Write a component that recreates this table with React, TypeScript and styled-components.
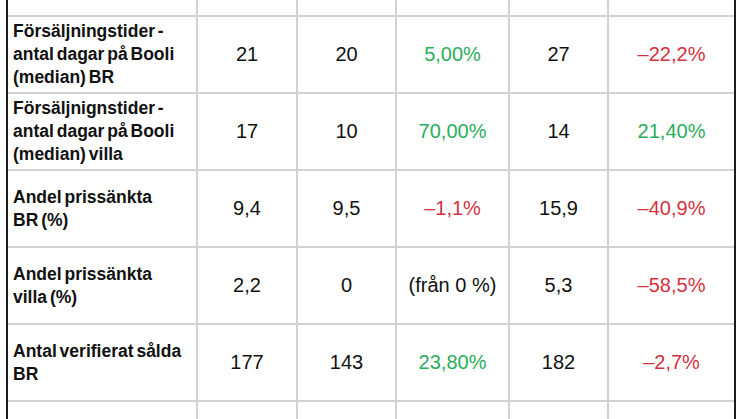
import React from 'react'
import styled, { createGlobalStyle } from 'styled-components'

const GlobalStyle = createGlobalStyle`
  html, body {
    margin: 0;
    padding: 0;
    background: #ffffff;
  }
  body {
    font-family: 'Liberation Sans', Arial, sans-serif;
    overflow: hidden;
  }
`

type Tone = 'plain' | 'up' | 'down'

interface IRow {
  label: string[]
  cells: { value: string; tone?: Tone }[]
}

const rows: IRow[] = [
  {
    label: ['Försäljningstider -', 'antal dagar på Booli', '(median) BR'],
    cells: [
      { value: '21' },
      { value: '20' },
      { value: '5,00%', tone: 'up' },
      { value: '27' },
      { value: '–22,2%', tone: 'down' },
    ],
  },
  {
    label: ['Försäljnignstider -', 'antal dagar på Booli', '(median) villa'],
    cells: [
      { value: '17' },
      { value: '10' },
      { value: '70,00%', tone: 'up' },
      { value: '14' },
      { value: '21,40%', tone: 'up' },
    ],
  },
  {
    label: ['Andel prissänkta', 'BR (%)'],
    cells: [
      { value: '9,4' },
      { value: '9,5' },
      { value: '–1,1%', tone: 'down' },
      { value: '15,9' },
      { value: '–40,9%', tone: 'down' },
    ],
  },
  {
    label: ['Andel prissänkta', 'villa (%)'],
    cells: [
      { value: '2,2' },
      { value: '0' },
      { value: '(från 0 %)' },
      { value: '5,3' },
      { value: '–58,5%', tone: 'down' },
    ],
  },
  {
    label: ['Antal verifierat sålda', 'BR'],
    cells: [
      { value: '177' },
      { value: '143' },
      { value: '23,80%', tone: 'up' },
      { value: '182' },
      { value: '–2,7%', tone: 'down' },
    ],
  },
]

const toneColors: Record<Tone, string> = {
  plain: '#111111',
  up: '#2aae5c',
  down: '#d3323f',
}

const Page = styled.div`
  padding-left: 6px;
  width: 746px;
  height: 419px;
  box-sizing: border-box;
  overflow: hidden;
`

const Grid = styled.div`
  display: grid;
  grid-template-columns: 190px 100px 99px 113px 99px 125px;
  grid-auto-rows: 77px;
  grid-template-rows: 17px;
  width: 726px;
  border-left: 2px solid #1c1c1c;
  border-right: 2px solid #1c1c1c;
`

const Cell = styled.div<{ $last?: boolean }>`
  box-sizing: border-box;
  border-bottom: 2px solid #d2d2d2;
  border-right: ${(p) => (p.$last ? 'none' : '2px solid #d2d2d2')};
  display: flex;
  align-items: center;
`

const LabelCell = styled(Cell)`
  padding-left: 5px;
  font-weight: 700;
  font-size: 17.5px;
  line-height: 23px;
  word-spacing: -2px;
  color: #111111;
`

const ValueCell = styled(Cell)<{ $tone: Tone }>`
  justify-content: center;
  font-size: 20px;
  color: ${(p) => toneColors[p.$tone]};
  padding-bottom: 1px;
`

const Lines = styled.div`
  display: flex;
  flex-direction: column;
`

const EmptyRow = () => (
  <>
    {Array.from({ length: 6 }).map((_, i) => (
      <Cell key={i} $last={i === 5} />
    ))}
  </>
)

const App = () => {
  return (
    <>
      <GlobalStyle />
      <Page>
        <Grid>
          <EmptyRow />
          {rows.map((row, r) => (
            <React.Fragment key={r}>
              <LabelCell>
                <Lines>
                  {row.label.map((line, i) => (
                    <span key={i}>{line}</span>
                  ))}
                </Lines>
              </LabelCell>
              {row.cells.map((cell, i) => (
                <ValueCell
                  key={i}
                  $tone={cell.tone || 'plain'}
                  $last={i === row.cells.length - 1}
                >
                  {cell.value}
                </ValueCell>
              ))}
            </React.Fragment>
          ))}
          <EmptyRow />
        </Grid>
      </Page>
    </>
  )
}

export default App
